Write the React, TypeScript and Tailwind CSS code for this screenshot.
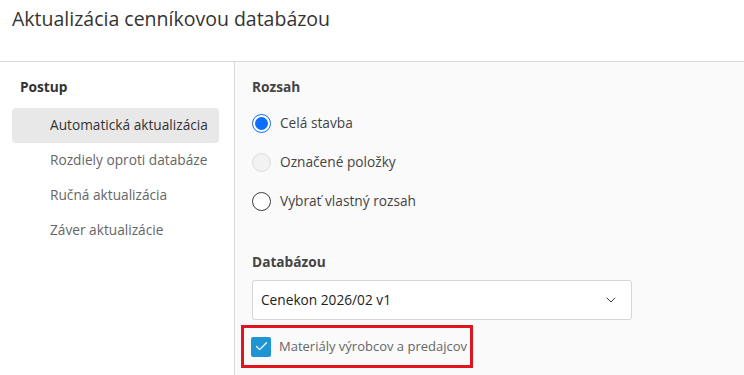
import { ChevronDown, Check } from 'lucide-react';

const steps = [
  'Automatická aktualizácia',
  'Rozdiely oproti databáze',
  'Ručná aktualizácia',
  'Záver aktualizácie',
];

function Radio({ state, label }: { state: 'checked' | 'disabled' | 'off'; label: string }) {
  return (
    <div className="flex h-[39px] items-center gap-[9px]">
      {state === 'checked' && (
        <div className="flex size-[19px] items-center justify-center rounded-full border border-[#0d6efd] bg-white">
          <div className="size-[13px] rounded-full bg-[#0d6efd]" />
        </div>
      )}
      {state === 'disabled' && (
        <div className="size-[19px] rounded-full border border-[#dcdcdc] bg-[#f2f2f2]" />
      )}
      {state === 'off' && (
        <div className="size-[19px] rounded-full border border-[#3a3a3a] bg-white" />
      )}
      <span className="text-[13.7px] text-[#444]">{label}</span>
    </div>
  );
}

export default function App() {
  return (
    <div
      className="flex h-[375px] w-[744px] flex-col overflow-hidden bg-white"
      style={{ fontFamily: '"Open Sans", sans-serif' }}
    >
      {/* header */}
      <div className="h-[62px] border-b border-[#d9d9d9] px-3 pt-[4px]">
        <h1 className="text-[19.5px] font-medium text-[#333]">Aktualizácia cenníkovou databázou</h1>
      </div>

      <div className="flex flex-1">
        {/* steps */}
        <div className="w-[235px] border-r border-[#d9d9d9] pl-3 pr-[15px] pt-[15px]">
          <p className="pl-2 text-[13.7px] font-bold text-[#333]">Postup</p>
          <div className="mt-[10px] flex flex-col">
            {steps.map((s, i) => (
              <div
                key={s}
                className={`flex h-[35px] items-center rounded-[4px] pl-[38px] text-[13.7px] ${
                  i === 0 ? 'bg-[#e8e8e8] text-[#333]' : 'text-[#666]'
                }`}
              >
                {s}
              </div>
            ))}
          </div>
        </div>

        {/* content */}
        <div className="flex-1 bg-[#fafafa] pl-[17px] pt-[15px]">
          <p className="text-[13.7px] font-bold text-[#444]">Rozsah</p>
          <div className="mt-[6px] flex flex-col">
            <Radio state="checked" label="Celá stavba" />
            <Radio state="disabled" label="Označené položky" />
            <Radio state="off" label="Vybrať vlastný rozsah" />
          </div>

          <p className="mt-[31px] text-[13.7px] font-bold text-[#444]">Databázou</p>
          <div className="mt-[8px] flex h-[40px] w-[380px] items-center justify-between rounded-[3px] border border-[#d6d6d6] bg-white pl-[8px] pr-[12px]">
            <span className="text-[13.7px] text-[#222]">Cenekon 2026/02 v1</span>
            <ChevronDown className="size-[16px] text-[#444]" strokeWidth={1.5} />
          </div>

          <div className="-ml-[11px] mt-[5px] flex h-[43px] w-[232px] items-center gap-[8px] border-[3px] border-[#e0151f] pl-[7px]">
            <div className="flex size-[20px] shrink-0 items-center justify-center rounded-[2px] bg-[#1f96d3]">
              <Check className="size-[15px] text-white" strokeWidth={2} />
            </div>
            <span className="whitespace-nowrap text-[13px] text-[#666]">Materiály výrobcov a predajcov</span>
          </div>
        </div>
      </div>
    </div>
  );
}
